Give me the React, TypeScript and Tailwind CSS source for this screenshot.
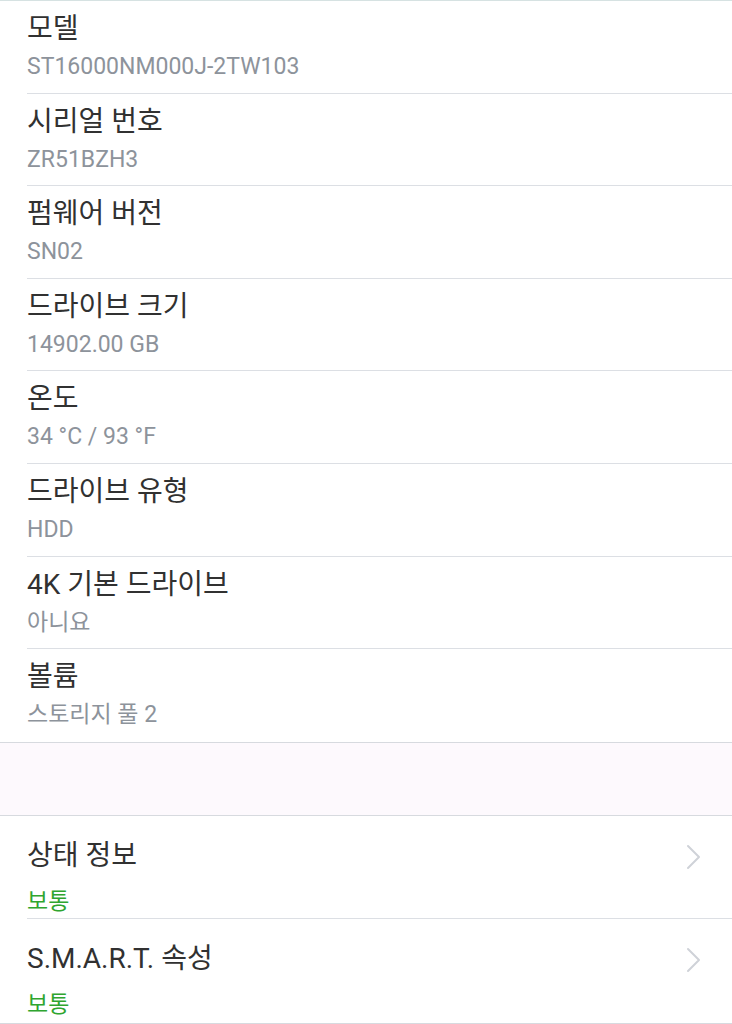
const info = [
  { label: '모델', value: 'ST16000NM000J-2TW103' },
  { label: '시리얼 번호', value: 'ZR51BZH3' },
  { label: '펌웨어 버전', value: 'SN02' },
  { label: '드라이브 크기', value: '14902.00 GB' },
  { label: '온도', value: '34 °C / 93 °F' },
  { label: '드라이브 유형', value: 'HDD' },
  { label: '4K 기본 드라이브', value: '아니요' },
  { label: '볼륨', value: '스토리지 풀 2' },
];

const status = [
  { label: '상태 정보', value: '보통' },
  { label: 'S.M.A.R.T. 속성', value: '보통' },
];

function Chevron() {
  return (
    <svg width="16" height="26" viewBox="0 0 16 26" fill="none" className="shrink-0">
      <polyline points="3,2 14,13 3,24" stroke="#cfd2d8" strokeWidth="2" strokeLinecap="round" strokeLinejoin="round" />
    </svg>
  );
}

export default function App() {
  return (
    <div
      className="w-[732px] h-[1024px] overflow-hidden bg-white"
      style={{ fontFamily: 'Roboto, "Noto Sans CJK KR", sans-serif' }}
    >
      <div className="h-px bg-[#d6e2e2]" />

      {/* Drive info */}
      <div className="border-b border-[#d7dadf]">
        {info.map((item, i) => (
          <div key={item.label} className="pl-[27px]">
            <div
              className={
                'h-[92.6px] flex flex-col pt-[10px] ' +
                (i < info.length - 1 ? 'border-b border-[#dcdfe4]' : '')
              }
            >
              <div className="text-[28px] leading-[36px] text-[#313131]">{item.label}</div>
              <div className="text-[23px] leading-[40px] text-[#8d939b]">{item.value}</div>
            </div>
          </div>
        ))}
      </div>

      {/* Spacer */}
      <div className="h-[73px] bg-[#fdf9fd] border-b border-[#d7dadf]" />

      {/* Status */}
      <div className="border-b border-[#d7dadf]">
        {status.map((item, i) => (
          <div key={item.label} className="pl-[27px]">
            <div
              className={
                'h-[103.5px] flex items-start pr-[31px] pt-[20px] ' +
                (i < status.length - 1 ? 'border-b border-[#dcdfe4]' : '')
              }
            >
              <div className="flex-1 flex flex-col">
                <div className="text-[28px] leading-[40px] text-[#313131]">{item.label}</div>
                <div className="text-[23px] leading-[52px] text-[#2fa52f]">{item.value}</div>
              </div>
              <div className="pt-[8px]">
                <Chevron />
              </div>
            </div>
          </div>
        ))}
      </div>
    </div>
  );
}
